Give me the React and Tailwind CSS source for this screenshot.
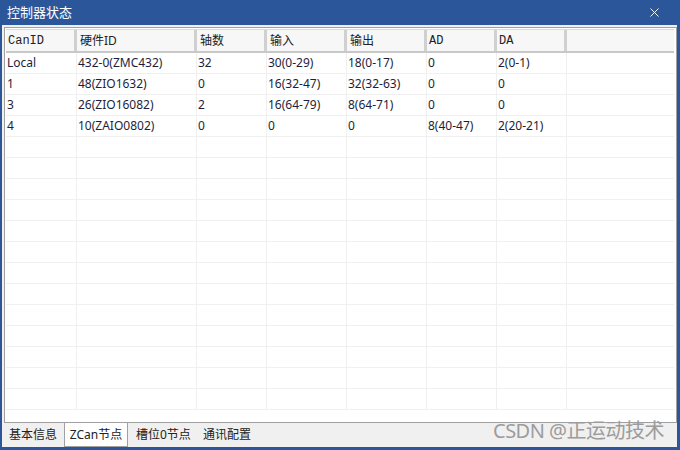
import { X } from 'lucide-react';

const cols = [
  { title: 'CanID', w: 'w-[71px]', mono: true },
  { title: '硬件ID', w: 'w-[120px]' },
  { title: '轴数', w: 'w-[70px]' },
  { title: '输入', w: 'w-[80px]' },
  { title: '输出', w: 'w-[80px]' },
  { title: 'AD', w: 'w-[70px]', mono: true },
  { title: 'DA', w: 'w-[70px]', mono: true },
];

const rows = [
  ['Local', '432-0(ZMC432)', '32', '30(0-29)', '18(0-17)', '0', '2(0-1)'],
  ['1', '48(ZIO1632)', '0', '16(32-47)', '32(32-63)', '0', '0'],
  ['3', '26(ZIO16082)', '2', '16(64-79)', '8(64-71)', '0', '0'],
  ['4', '10(ZAIO0802)', '0', '0', '0', '8(40-47)', '2(20-21)'],
];

const emptyRows = Array.from({ length: 13 }, () => ['', '', '', '', '', '', '']);

export default function App() {
  const allRows = [...rows, ...emptyRows];
  return (
    <div className="relative w-[680px] h-[450px] bg-[#2b579a] flex flex-col overflow-hidden font-[family-name:'Noto_Sans','Noto_Sans_CJK_SC',sans-serif]">
      <div className="h-[25px] flex items-center justify-between pl-[7px] pr-[18px] text-white text-[13px]">
        <span>控制器状态</span>
        <X className="w-[15px] h-[15px]" strokeWidth={1.5} />
      </div>
      <div className="flex-1 ml-[2px] mr-[3px] mb-[3px] bg-[#f0f0f0] flex flex-col pl-[2px] pt-[2px]">
        <div className="h-[396px] border border-[#a0a0a0] bg-white p-px overflow-hidden">
          <div className="flex h-[24px] w-[668px] bg-[#f7f7f7] border-t border-[#dcdcdc] border-b-2 border-b-[#c8c8c8]">
            {cols.map((c) => (
              <div
                key={c.title}
                className={`${c.w} shrink-0 border-r-[3px] border-[#d0d0d0] flex items-center pl-[3px] text-[12px] text-[#222]`}
              >
                {c.mono ? (
                  <span className="font-[family-name:'Liberation_Mono',monospace] text-[12px] -ml-px">{c.title}</span>
                ) : (
                  c.title
                )}
              </div>
            ))}
            <div className="flex-1" />
          </div>
          {allRows.map((r, i) => (
            <div key={i} className="flex h-[21px] w-[668px] border-b border-[#f0f0f0]">
              {r.map((v, j) => (
                <div
                  key={j}
                  className={`${cols[j].w} shrink-0 border-r border-[#f0f0f0] flex items-center pl-[1px] text-[12px] text-[#1e1e3a] whitespace-nowrap`}
                >
                  {v}
                </div>
              ))}
              <div className="flex-1" />
            </div>
          ))}
        </div>
        <div className="flex h-[24px] text-[12px] text-[#222]">
          <div className="w-[60px] flex items-center pl-[5px]">基本信息</div>
          <div className="w-[64px] flex items-center justify-center bg-white border border-t-0 border-[#a0a0a0]">ZCan节点</div>
          <div className="flex items-center pl-[8px]">槽位0节点</div>
          <div className="flex items-center pl-[12px]">通讯配置</div>
        </div>
      </div>
      <div className="absolute left-[493px] top-[418px] text-[20px] leading-[26px] text-[#9c9c9c] tracking-[-0.5px]">
        CSDN @正运动技术
      </div>
    </div>
  );
}
